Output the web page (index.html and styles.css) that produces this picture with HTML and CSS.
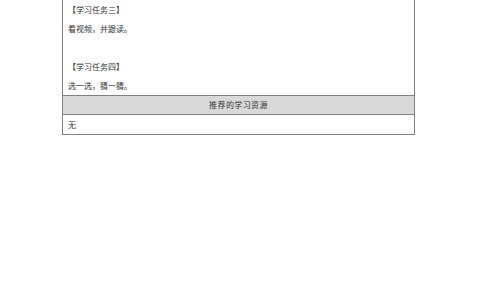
FILE: index.html
```html
<!DOCTYPE html>
<html lang="zh-CN">
<head>
    <meta charset="UTF-8">
    <meta name="viewport" content="width=device-width, initial-scale=1.0">
    <title>学习任务单</title>
    <link rel="stylesheet" href="styles.css">
</head>
<body>
    <div class="sheet">
        <!-- 学习任务内容 -->
        <div class="cell tasks">
            <p>【学习任务三】</p>
            <p>看视频，并跟读。</p>
            <p class="blank"></p>
            <p>【学习任务四】</p>
            <p>选一选，猜一猜。</p>
        </div>

        <div class="cell head">推荐的学习资源</div>
        <div class="cell resources">无</div>
    </div>
</body>
</html>
```

FILE: styles.css
```css
body {
    margin: 0;
    padding: 0;
    background: #fff;
    color: #333;
    font-family: "Noto Sans CJK SC", "Noto Sans", sans-serif;
    font-size: 8px;
}

/* 表格外框，上半部分接着上一页 */
.sheet {
    width: 351px;
    margin-left: 62px;
    border: 1px solid #808080;
    border-top: none;
}

.cell {
    padding: 0 5px;
    line-height: 19px;
}

.cell + .cell {
    border-top: 1px solid #808080;
}

.tasks p {
    margin: 0;
    height: 19px;
}

.head {
    background: #d9d9d9;
    text-align: center;
    line-height: 18px;
    letter-spacing: 0.4px;
}

.resources {
    line-height: 19px;
}
```
